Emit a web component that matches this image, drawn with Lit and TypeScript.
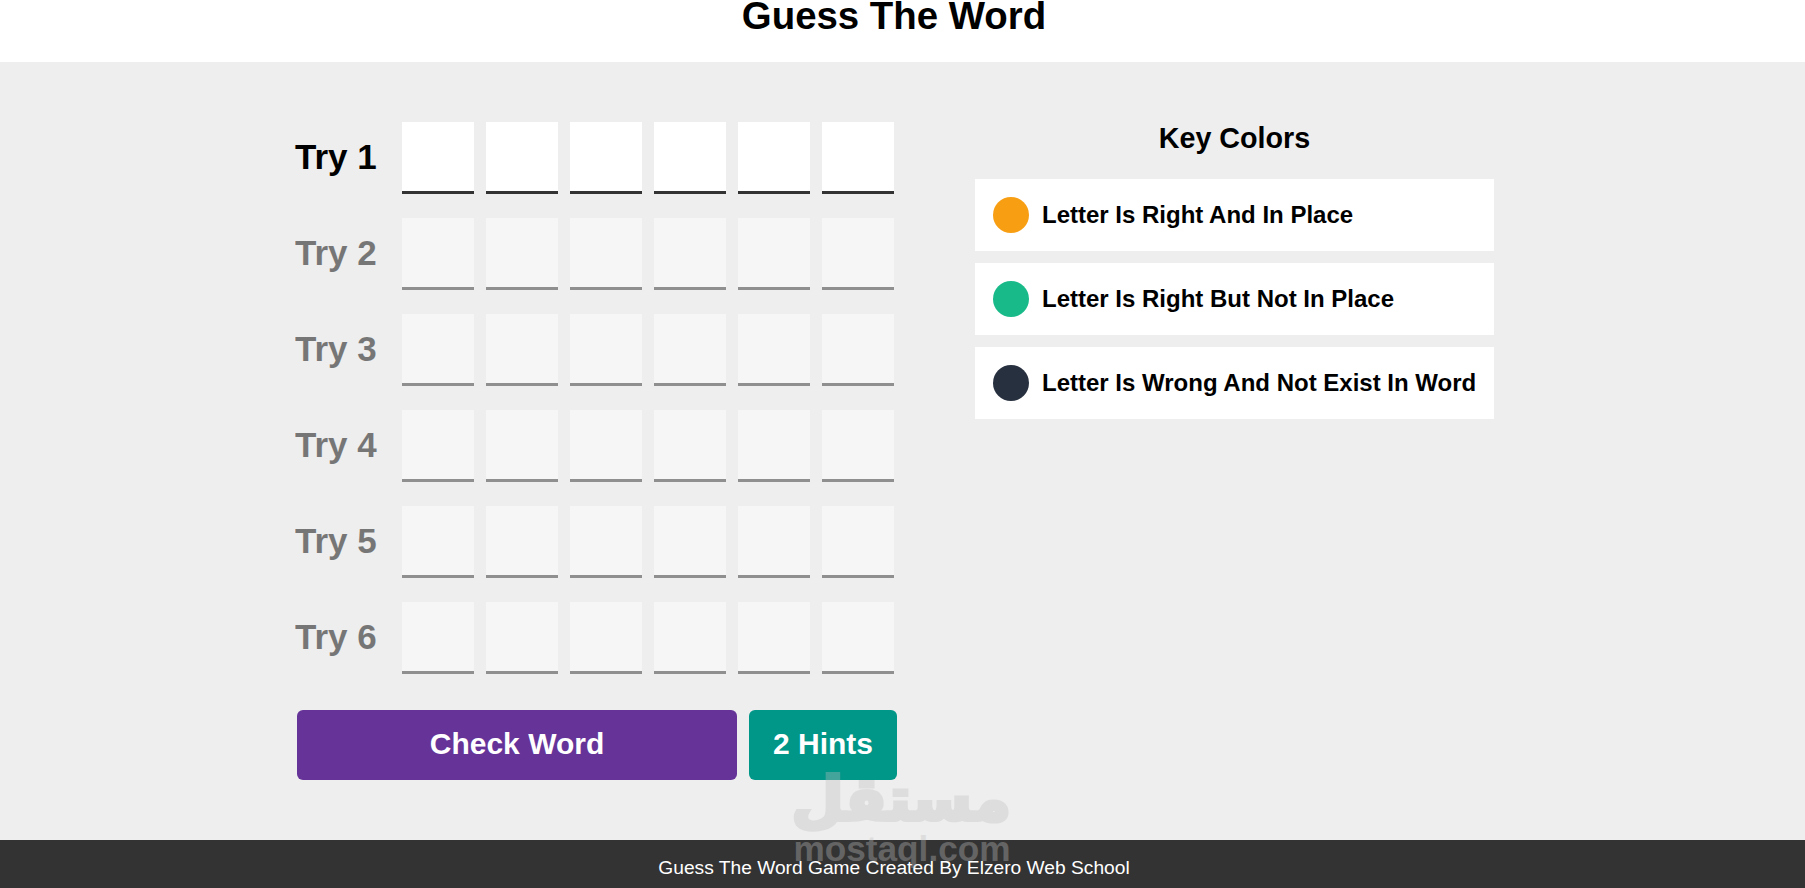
import { LitElement, html, css } from "lit";
import { customElement } from "lit/decorators.js";

const TRIES = [1, 2, 3, 4, 5, 6];
const CELLS = [1, 2, 3, 4, 5, 6];
const KEYS = [
  { cls: "orange", text: "Letter Is Right And In Place" },
  { cls: "green", text: "Letter Is Right But Not In Place" },
  { cls: "navy", text: "Letter Is Wrong And Not Exist In Word" },
];

@customElement("app-root")
export class AppRoot extends LitElement {
  static styles = css`
    :host {
      display: block;
      position: relative;
      height: 888px;
      overflow: hidden;
      background: #eee;
      font-family: "Liberation Sans", Arial, sans-serif;
      color: #000;
    }
    * { box-sizing: border-box; }
    .page { display: flex; flex-direction: column; width: 1788px; height: 888px; }
    header {
      height: 62px;
      background: #fff;
      box-shadow: 17px 0 0 #fff;
      text-align: center;
    }
    h1 { margin: 0; font-size: 38.4px; line-height: 32px; font-weight: 700; }
    main {
      flex: 1;
      display: flex;
      width: 1200px;
      margin: 0 auto;
      padding-top: 60px;
      gap: 78px;
      transform: translateX(1px);
    }
    .game { width: 602px; }
    .tries { display: flex; flex-direction: column; gap: 24px; }
    .try { display: flex; align-items: center; }
    .try.off { opacity: 0.5; }
    .label { width: 107px; font-size: 35px; font-weight: 700; line-height: 70px; height: 72px; }
    .cells { display: flex; gap: 12px; }
    .cell {
      width: 72px;
      height: 72px;
      background: #fff;
      border-bottom: 3px solid #333;
    }
    .actions { display: flex; gap: 12px; margin: 36px 0 0 2px; }
    button {
      height: 70px;
      border: 0;
      border-radius: 6px;
      color: #fff;
      font: 700 30px/68px "Liberation Sans", Arial, sans-serif;
      padding: 0 0 2px;
    }
    .check { width: 440px; background: #663399; }
    .hints { width: 148px; background: #009688; }
    .keys { width: 519px; }
    h2 { margin: 0 0 24px; font-size: 28.7px; line-height: 33px; text-align: center; font-weight: 700; }
    .list { display: flex; flex-direction: column; gap: 12px; }
    .key {
      height: 72px;
      background: #fff;
      display: flex;
      align-items: center;
      gap: 13px;
      padding-left: 18px;
      font-size: 24px;
      font-weight: 700;
    }
    .dot { width: 36px; height: 36px; border-radius: 50%; flex: none; }
    .orange { background: #f89e13; }
    .green { background: #18ba89; }
    .navy { background: #27303f; }
    footer {
      height: 48px;
      background: #333;
      box-shadow: 17px 0 0 #333;
      color: #fff;
      text-align: center;
      font-size: 19.2px;
      line-height: 48px;
      padding-top: 4px;
    }
    .mark {
      position: absolute;
      left: 793px;
      top: 770px;
      width: 218px;
      text-align: center;
      pointer-events: none;
      color: #c0c0c0;
      opacity: 0.35;
      font-weight: 700;
    }
    .mark-ar {
      display: block;
      font: 700 60px/59px "DejaVu Sans", sans-serif;
      -webkit-text-stroke: 4px #c0c0c0;
      stroke-linejoin: round;
    }
    .mark-en {
      display: block;
      font: 700 35.2px/40px "Liberation Sans", sans-serif;
    }
  `;

  render() {
    return html`
      <div class="page">
        <header><h1>Guess The Word</h1></header>
        <main>
          <section class="game">
            <div class="tries">
              ${TRIES.map(
                (t) => html`
                  <div class="try ${t === 1 ? "" : "off"}">
                    <div class="label">Try ${t}</div>
                    <div class="cells">${CELLS.map(() => html`<div class="cell"></div>`)}</div>
                  </div>
                `
              )}
            </div>
            <div class="actions">
              <button class="check">Check Word</button>
              <button class="hints">2 Hints</button>
            </div>
          </section>
          <aside class="keys">
            <h2>Key Colors</h2>
            <div class="list">
              ${KEYS.map(
                (k) => html`<div class="key"><span class="dot ${k.cls}"></span><span>${k.text}</span></div>`
              )}
            </div>
          </aside>
        </main>
        <footer>Guess The Word Game Created By Elzero Web School</footer>
      </div>
      <div class="mark" aria-hidden="true">
        <span class="mark-ar" dir="rtl">مستقل</span>
        <span class="mark-en">mostaql.com</span>
      </div>
    `;
  }
}
